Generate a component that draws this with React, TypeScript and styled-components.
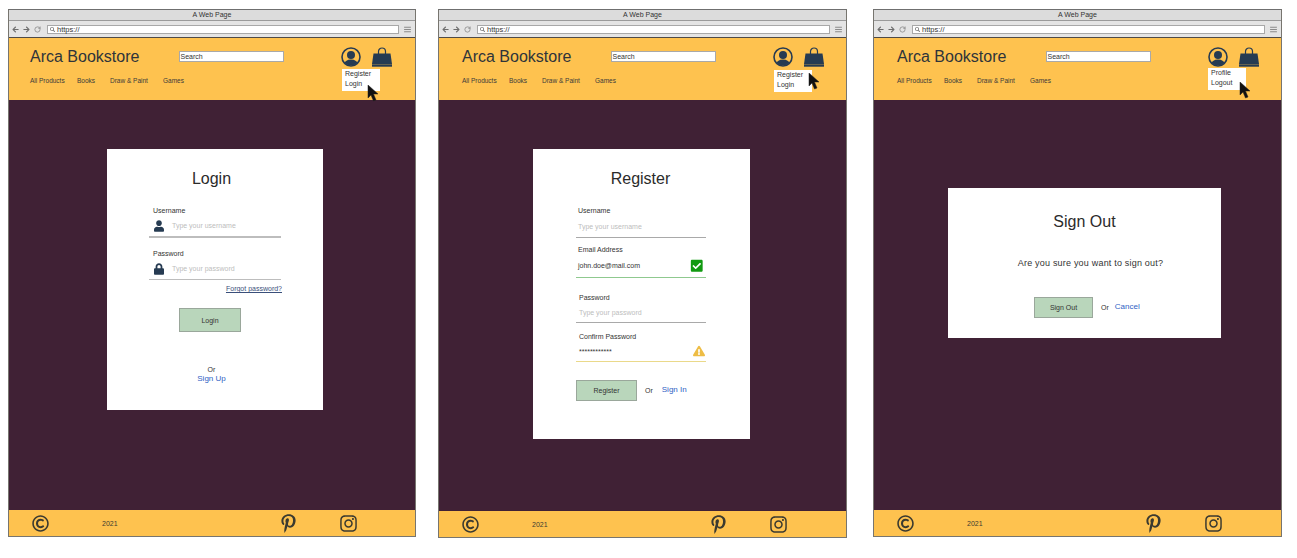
import type { ReactNode } from 'react';
import styled, { createGlobalStyle } from 'styled-components';
import { FaArrowLeft, FaArrowRight, FaCheckSquare, FaExclamationTriangle, FaInstagram, FaLock, FaPinterestP, FaRegCopyright, FaSearch, FaUser } from 'react-icons/fa';
import { LuMenu, LuRotateCw } from 'react-icons/lu';

const GlobalStyle = createGlobalStyle`
  html, body {
    margin: 0;
    background: #ffffff;
  }
  body {
    font-family: 'Liberation Sans', Arial, sans-serif;
    color: #2b2b2b;
  }
  * {
    box-sizing: border-box;
  }
`;

const Page = styled.div`
  display: flex;
  align-items: flex-start;
  width: 1297px;
  height: 558px;
  padding: 9px 0 0 8px;
  overflow: hidden;
`;

const Window = styled.div<{ $width: number; $after: number }>`
  position: relative;
  display: flex;
  flex-direction: column;
  width: ${({ $width }) => $width}px;
  margin-right: ${({ $after }) => $after}px;
  flex-shrink: 0;
  border: 1px solid #77756f;
  border-top-color: #6f6f6f;
`;

const TitleBar = styled.div`
  height: 11px;
  background: #dcdcdc;
  border-bottom: 1px solid #9a9a9a;
  font-size: 7px;
  line-height: 9px;
  text-align: center;
  color: #333;
`;

const AddressBar = styled.div`
  display: flex;
  align-items: center;
  height: 17px;
  padding: 0 3px;
  gap: 4px;
  background: #e4e4e4;
  border-bottom: 1px solid #4f4a44;
  color: #6d6d6d;
  font-size: 7px;
`;

const UrlBox = styled.div`
  display: flex;
  align-items: center;
  flex: 1;
  gap: 2px;
  height: 9px;
  margin-left: 2px;
  padding-left: 2px;
  background: #fff;
  border: 1px solid #a8a8a8;
  font-size: 7.5px;
  color: #333;
`;

const Header = styled.header<{ $inset: number }>`
  position: relative;
  display: flex;
  flex-direction: column;
  height: 62px;
  padding: 8px 0 0 ${({ $inset }) => $inset}px;
  background: #fec24f;
`;

const BrandRow = styled.div`
  display: flex;
  align-items: center;
  height: 20px;
`;

const Brand = styled.div`
  width: 148.5px;
  padding-top: 2px;
  font-size: 16px;
  color: #2f343a;
  white-space: nowrap;
`;

const SearchBox = styled.div`
  width: 105px;
  height: 11px;
  padding-left: 1px;
  background: #fff;
  border: 1px solid #a9a9a9;
  font-size: 7px;
  line-height: 9px;
  color: #333;
`;

const AccountIcons = styled.div`
  display: flex;
  align-items: center;
  gap: 11px;
  margin: 2px 0 0 57px;
`;

const Nav = styled.nav`
  display: flex;
  margin-top: 11px;
  font-size: 6.5px;
  color: #3a3a3a;
`;

const NavItem = styled.span<{ $width: number }>`
  width: ${({ $width }) => $width}px;
  white-space: nowrap;
`;

const Dropdown = styled.div<{ $left: number; $top: number }>`
  position: absolute;
  left: ${({ $left }) => $left}px;
  top: ${({ $top }) => $top}px;
  width: 38px;
  height: 22px;
  padding: 0 0 0 3px;
  background: #fff;
  font-size: 7px;
  line-height: 10px;
  color: #333;
`;

const Cursor = styled.svg<{ $left: number; $top: number }>`
  position: absolute;
  left: ${({ $left }) => $left}px;
  top: ${({ $top }) => $top}px;
`;

const Main = styled.main<{ $height: number; $left: number; $top: number }>`
  height: ${({ $height }) => $height}px;
  padding: ${({ $top }) => $top}px 0 0 ${({ $left }) => $left}px;
  background: #402135;
`;

const Card = styled.section<{ $width: number; $height: number }>`
  display: flex;
  flex-direction: column;
  width: ${({ $width }) => $width}px;
  height: ${({ $height }) => $height}px;
  background: #fff;
`;

const CardTitle = styled.h1<{ $top: number; $shift?: number }>`
  margin: ${({ $top }) => $top}px 0 0;
  padding-right: ${({ $shift = 0 }) => $shift}px;
  font-size: 16px;
  line-height: 18px;
  font-weight: 400;
  text-align: center;
  color: #2b2b2b;
`;

const Form = styled.div<{ $left: number; $top: number; $width: number }>`
  display: flex;
  flex-direction: column;
  width: ${({ $width }) => $width}px;
  margin: ${({ $top }) => $top}px 0 0 ${({ $left }) => $left}px;
`;

const Label = styled.div<{ $top?: number; $indent?: number }>`
  margin-top: ${({ $top = 0 }) => $top}px;
  padding-left: ${({ $indent = 4 }) => $indent}px;
  font-size: 7px;
  line-height: 9px;
  color: #333;
`;

const InputRow = styled.div<{ $height: number; $line: string; $lineSize?: number; $pad?: number }>`
  display: flex;
  align-items: center;
  height: ${({ $height }) => $height}px;
  padding-left: ${({ $pad = 4 }) => $pad}px;
  border-bottom: ${({ $lineSize = 1 }) => $lineSize}px solid ${({ $line }) => $line};
  font-size: 7px;
  color: #333;
`;

const Placeholder = styled.span<{ $indent?: number }>`
  margin-left: ${({ $indent = 0 }) => $indent}px;
  color: #bdbdbd;
`;

const FieldIcon = styled.span<{ $color: string; $size: number; $right: number }>`
  display: flex;
  margin-left: auto;
  margin-right: ${({ $right }) => $right}px;
  color: ${({ $color }) => $color};
  font-size: ${({ $size }) => $size}px;
`;

const LeadIcon = styled.span`
  display: flex;
  width: 10px;
  margin-left: 1px;
  color: #263b52;
  font-size: 12px;
`;

const ForgotLink = styled.a`
  align-self: flex-end;
  margin: 4px -1px 0 0;
  font-size: 7px;
  line-height: 9px;
  color: #3a4f7a;
  text-decoration: underline;
`;

const Button = styled.button<{ $width: number; $height: number }>`
  width: ${({ $width }) => $width}px;
  height: ${({ $height }) => $height}px;
  padding: 0;
  background: #b9d6bb;
  border: 1px solid #9aa79b;
  font-family: inherit;
  font-size: 7px;
  color: #333;
`;

const CenterButton = styled.div<{ $left: number; $top: number }>`
  display: flex;
  margin: ${({ $top }) => $top}px 0 0 ${({ $left }) => $left}px;
`;

const Stack = styled.div<{ $top: number }>`
  display: flex;
  flex-direction: column;
  align-items: center;
  margin-top: ${({ $top }) => $top}px;
  padding-right: 7px;
  font-size: 7px;
  line-height: 8px;
  color: #333;
`;

const ActionRow = styled.div<{ $left: number; $top: number }>`
  display: flex;
  align-items: center;
  margin: ${({ $top }) => $top}px 0 0 ${({ $left }) => $left}px;
  font-size: 7px;
  color: #333;
`;

const LinkText = styled.a<{ $left?: number; $lift?: number }>`
  margin-left: ${({ $left = 0 }) => $left}px;
  margin-bottom: ${({ $lift = 0 }) => $lift}px;
  font-size: 8px;
  line-height: 10px;
  color: #2f62c4;
`;

const OrText = styled.span`
  margin-left: 8px;
`;

const Message = styled.p`
  margin: 26px 0 0;
  padding-left: 12px;
  font-size: 9px;
  line-height: 12px;
  letter-spacing: 0.2px;
  text-align: center;
  color: #333;
`;

const Footer = styled.footer`
  display: flex;
  align-items: center;
  height: 26px;
  padding-left: 23px;
  background: #fec24f;
  color: #3b3a30;
`;

const CopyIcon = styled(FaRegCopyright)`
  font-size: 17px;
`;

const Year = styled.span`
  margin-left: 53px;
  width: 177px;
  font-size: 7px;
`;

const PinIcon = styled(FaPinterestP)`
  font-size: 19px;
`;

const InstaIcon = styled(FaInstagram)`
  margin-left: 41px;
  font-size: 19px;
`;

const BrowserIcon = styled.span`
  display: flex;
  font-size: 7px;
`;

const MenuGlyph = styled(LuMenu)`
  font-size: 9px;
`;

const UserCircle = () => (
  <svg width="20" height="20" viewBox="0 0 20 20">
    <defs>
      <clipPath id="ring">
        <circle cx="10" cy="10" r="8.6" />
      </clipPath>
    </defs>
    <circle cx="10" cy="10" r="9" fill="none" stroke="#263b52" strokeWidth="1.6" />
    <circle cx="10" cy="8" r="4" fill="#263b52" />
    <ellipse cx="10" cy="17.5" rx="7" ry="5" fill="#263b52" clipPath="url(#ring)" />
  </svg>
);

const Bag = () => (
  <svg width="20" height="20" viewBox="0 0 20 20">
    <path d="M6.5 8V4.5a3.5 3.5 0 0 1 7 0V8" fill="none" stroke="#263b52" strokeWidth="1.2" />
    <path d="M1.5 6.5h17l1.5 10.4H0z" fill="#263b52" />
    <rect x="0" y="17.3" width="20" height="2.4" fill="#263b52" />
  </svg>
);

const Arrow = ({ left, top }: { left: number; top: number }) => (
  <Cursor $left={left} $top={top} width="13" height="17" viewBox="0 0 13 17">
    <path d="M1 0v13l3-3 2.5 6 2.5-1-2.5-6H11z" fill="#111" stroke="#222" strokeWidth="0.5" />
  </Cursor>
);

interface ShellProps {
  width: number;
  after: number;
  inset: number;
  menu: [string, string];
  menuLeft: number;
  menuTop: number;
  cursorLeft: number;
  cursorTop: number;
  mainHeight: number;
  mainLeft: number;
  mainTop: number;
  children: ReactNode;
}

const BrowserWindow = (props: ShellProps) => (
  <Window $width={props.width} $after={props.after}>
    <TitleBar>A Web Page</TitleBar>
    <AddressBar>
      <BrowserIcon><FaArrowLeft /></BrowserIcon>
      <BrowserIcon><FaArrowRight /></BrowserIcon>
      <BrowserIcon><LuRotateCw /></BrowserIcon>
      <UrlBox>
        <FaSearch size={5} color="#777" />
        https://
      </UrlBox>
      <MenuGlyph />
    </AddressBar>
    <Header $inset={props.inset}>
      <BrandRow>
        <Brand>Arca Bookstore</Brand>
        <SearchBox>Search</SearchBox>
        <AccountIcons>
          <UserCircle />
          <Bag />
        </AccountIcons>
      </BrandRow>
      <Nav>
        <NavItem $width={47}>All Products</NavItem>
        <NavItem $width={33}>Books</NavItem>
        <NavItem $width={53}>Draw &amp; Paint</NavItem>
        <NavItem $width={30}>Games</NavItem>
      </Nav>
      <Dropdown $left={props.menuLeft} $top={props.menuTop}>
        <div>{props.menu[0]}</div>
        <div>{props.menu[1]}</div>
      </Dropdown>
      <Arrow left={props.cursorLeft} top={props.cursorTop} />
    </Header>
    <Main $height={props.mainHeight} $left={props.mainLeft} $top={props.mainTop}>
      {props.children}
    </Main>
    <Footer>
      <CopyIcon />
      <Year>2021</Year>
      <PinIcon />
      <InstaIcon />
    </Footer>
  </Window>
);

const App = () => (
  <>
    <GlobalStyle />
    <Page>
      <BrowserWindow
        width={408}
        after={22}
        inset={21}
        menu={['Register', 'Login']}
        menuLeft={333}
        menuTop={31}
        cursorLeft={358}
        cursorTop={47}
        mainHeight={410}
        mainLeft={98}
        mainTop={49}
      >
        <Card $width={216} $height={261}>
          <CardTitle $top={21} $shift={7}>Login</CardTitle>
          <Form $left={42} $top={18} $width={132}>
            <Label>Username</Label>
            <InputRow $height={23} $line="#bdbdbd" $lineSize={2}>
              <LeadIcon><FaUser /></LeadIcon>
              <Placeholder $indent={8}>Type your username</Placeholder>
            </InputRow>
            <Label $top={11}>Password</Label>
            <InputRow $height={22} $line="#bdbdbd">
              <LeadIcon><FaLock /></LeadIcon>
              <Placeholder $indent={8}>Type your password</Placeholder>
            </InputRow>
            <ForgotLink>Forgot password?</ForgotLink>
          </Form>
          <CenterButton $left={72} $top={15}>
            <Button $width={62} $height={24}>Login</Button>
          </CenterButton>
          <Stack $top={34}>
            Or
            <LinkText>Sign Up</LinkText>
          </Stack>
        </Card>
      </BrowserWindow>
      <BrowserWindow
        width={409}
        after={26}
        inset={23}
        menu={['Register', 'Login']}
        menuLeft={335}
        menuTop={32}
        cursorLeft={369}
        cursorTop={35}
        mainHeight={411}
        mainLeft={94}
        mainTop={49}
      >
        <Card $width={217} $height={290}>
          <CardTitle $top={21} $shift={2}>Register</CardTitle>
          <Form $left={43} $top={18} $width={130}>
            <Label $indent={2}>Username</Label>
            <InputRow $height={23} $line="#a9a9a9" $pad={2}>
              <Placeholder>Type your username</Placeholder>
            </InputRow>
            <Label $top={7} $indent={2}>Email Address</Label>
            <InputRow $height={24} $line="#8fc98f" $pad={2}>
              john.doe@mail.com
              <FieldIcon $color="#119a11" $size={13.5} $right={3}><FaCheckSquare /></FieldIcon>
            </InputRow>
            <Label $top={15} $indent={3}>Password</Label>
            <InputRow $height={21} $line="#a9a9a9" $pad={3}>
              <Placeholder>Type your password</Placeholder>
            </InputRow>
            <Label $top={9} $indent={3}>Confirm Password</Label>
            <InputRow $height={21} $line="#ead98a" $pad={3}>
              ************
              <FieldIcon $color="#eebd45" $size={12} $right={1}><FaExclamationTriangle /></FieldIcon>
            </InputRow>
          </Form>
          <ActionRow $left={43} $top={18}>
            <Button $width={61} $height={21}>Register</Button>
            <OrText>Or</OrText>
            <LinkText $left={9} $lift={2}>Sign In</LinkText>
          </ActionRow>
        </Card>
      </BrowserWindow>
      <BrowserWindow
        width={409}
        after={0}
        inset={23}
        menu={['Profile', 'Logout']}
        menuLeft={334}
        menuTop={30}
        cursorLeft={365}
        cursorTop={44}
        mainHeight={410}
        mainLeft={74}
        mainTop={88}
      >
        <Card $width={273} $height={150}>
          <CardTitle $top={25}>Sign Out</CardTitle>
          <Message>Are you sure you want to sign out?</Message>
          <ActionRow $left={86} $top={28}>
            <Button $width={59} $height={21}>Sign Out</Button>
            <OrText>Or</OrText>
            <LinkText $left={6} $lift={2}>Cancel</LinkText>
          </ActionRow>
        </Card>
      </BrowserWindow>
    </Page>
  </>
);

export default App;
